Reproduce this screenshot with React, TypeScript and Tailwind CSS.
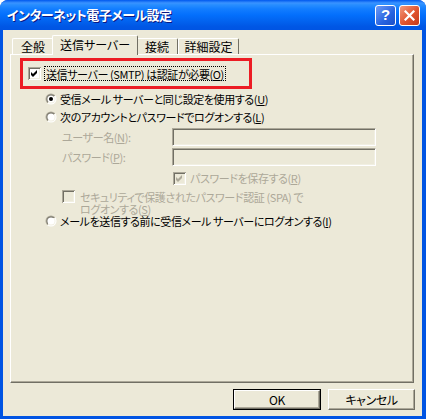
const face = "bg-[#ECE9D8]";

export default function App() {
  return (
    <div className="w-[426px] h-[419px] flex flex-col bg-[#0054E3] rounded-t-[8px] overflow-hidden font-['Noto_Sans_CJK_JP',sans-serif] text-[11px] leading-[14px] tracking-[-0.4px] text-black [font-feature-settings:'palt']">
      {/* Title bar */}
      <div className="h-[30px] shrink-0 flex items-center pl-[7px] pr-[6px] bg-[linear-gradient(to_bottom,#0058EE_0%,#3A93FF_10%,#288EFF_16%,#127DFF_30%,#036FFC_50%,#0262EE_72%,#0057E5_88%,#0054E3_100%)]">
        <span className="text-white font-bold text-[13px] [text-shadow:1px_1px_0_#0A1883] tracking-[-0.5px]">
          インターネット電子メール設定
        </span>
        <div className="ml-auto flex gap-[3px]">
          <div className="w-[21px] h-[21px] rounded-[3px] border border-white bg-[linear-gradient(135deg,#6F9BF6,#2663E0_60%,#1B50C8)] flex items-center justify-center text-white font-bold text-[15px] font-['Liberation_Sans',sans-serif]">
            ?
          </div>
          <div className="w-[21px] h-[21px] rounded-[3px] border border-white bg-[linear-gradient(135deg,#F29A7E,#E0532E_55%,#C43A1B)] flex items-center justify-center">
            <svg width="11" height="11" viewBox="0 0 11 11">
              <path d="M1.5 1.5 L9.5 9.5 M9.5 1.5 L1.5 9.5" stroke="white" strokeWidth="2.2" strokeLinecap="square" />
            </svg>
          </div>
        </div>
      </div>

      {/* Window body */}
      <div className={`flex-1 flex flex-col ${face} ml-[3px] mr-[4px] mb-[3px]`}>
        {/* Tabs */}
        <div className="h-[24px] shrink-0 flex items-end pl-[9px] text-[12px] tracking-normal">
          <Tab label="全般" className="w-[42px]" />
          <Tab label="送信サーバー" selected className="w-[86px]" />
          <Tab label="接続" className="w-[42px]" />
          <Tab label="詳細設定" className="w-[61px]" />
        </div>

        {/* Tab page */}
        <div className="h-[329px] shrink-0 ml-[7px] mr-[8px] border-t border-l border-white border-r border-b border-r-[#716F64] border-b-[#716F64] shadow-[inset_-1px_-1px_0_#ACA899] flex flex-col whitespace-nowrap">
          <div className="mt-[3px] ml-[9px] w-[232px] h-[31px] border-[3px] border-[#EC1C24] flex items-center pl-[5px]">
            <CheckBox checked />
            <span className="ml-[3px] px-[1px] h-[15px] flex items-center border border-dotted border-black">
              送信サーバー (SMTP) は認証が必要(<u>O</u>)
            </span>
          </div>

          <div className="mt-[1px] h-[18px] flex items-center ml-[34px]">
            <Radio checked />
            <span className="ml-[3px]">
              受信メール サーバーと同じ設定を使用する(<u>U</u>)
            </span>
          </div>
          <div className="h-[18px] flex items-center ml-[34px]">
            <Radio />
            <span className="ml-[3px]">
              次のアカウントとパスワードでログオンする(<u>L</u>)
            </span>
          </div>

          <div className="mt-[2px] h-[18px] flex items-center ml-[51px]">
            <span className="w-[110px] text-[#ACA899]">
              ユーザー名(<u>N</u>):
            </span>
            <Field />
          </div>
          <div className="mt-[2px] h-[18px] flex items-center ml-[51px]">
            <span className="w-[110px] text-[#ACA899]">
              パスワード(<u>P</u>):
            </span>
            <Field />
          </div>

          <div className="mt-[4px] h-[16px] flex items-center ml-[162px]">
            <CheckBox checked disabled />
            <span className="ml-[4px] text-[#ACA899]">
              パスワードを保存する(<u>R</u>)
            </span>
          </div>

          <div className="mt-[4px] flex items-start ml-[51px]">
            <CheckBox disabled />
            <span className="ml-[5px] mt-[1px] leading-[12px] text-[#ACA899]">
              セキュリティで保護されたパスワード認証 (SPA) で
              <br />
              ログオンする(<u>S</u>)
            </span>
          </div>

          <div className="h-[12px] flex items-center ml-[34px]">
            <Radio />
            <span className="ml-[3px]">
              メールを送信する前に受信メール サーバーにログオンする(<u>I</u>)
            </span>
          </div>
        </div>

        {/* Buttons */}
        <div className="mt-[6px] flex justify-end gap-[7px] pr-[7px] text-[12px]">
          <Button label="OK" isDefault />
          <Button label="キャンセル" />
        </div>
      </div>
    </div>
  );
}

function Tab({ label, selected, className }: { label: string; selected?: boolean; className?: string }) {
  return (
    <div
      className={
        selected
          ? `${className} relative z-10 -mx-[2px] -mb-[1px] h-[20px] ${face} border-t border-l border-white border-r border-r-[#716F64] rounded-t-[2px] flex items-center justify-center pb-[2px]`
          : `${className} h-[16px] ${face} border-t border-l border-white border-r border-r-[#716F64] rounded-t-[2px] flex items-center justify-center`
      }
    >
      {label}
    </div>
  );
}

function CheckBox({ checked, disabled }: { checked?: boolean; disabled?: boolean }) {
  return (
    <svg width="13" height="13" viewBox="0 0 13 13" className="shrink-0">
      <rect x="0" y="0" width="13" height="13" fill="#ACA899" />
      <rect x="1" y="1" width="12" height="12" fill="#FFFFFF" />
      <rect x="1" y="1" width="11" height="11" fill="#716F64" />
      <rect x="2" y="2" width="10" height="10" fill="#F1EFE2" />
      <rect x="2" y="2" width="9" height="9" fill={disabled ? "#ECE9D8" : "#FFFFFF"} />
      {checked && <polygon points="3,5 5,7 9,3 9,6 5,10 3,8" fill={disabled ? "#ACA899" : "#000000"} />}
    </svg>
  );
}

function Radio({ checked }: { checked?: boolean }) {
  return (
    <svg width="12" height="12" viewBox="0 0 12 12" className="shrink-0">
      <defs>
        <linearGradient id="rOuter" x1="0" y1="0" x2="1" y2="1">
          <stop offset="0.5" stopColor="#ACA899" />
          <stop offset="0.5" stopColor="#FFFFFF" />
        </linearGradient>
        <linearGradient id="rInner" x1="0" y1="0" x2="1" y2="1">
          <stop offset="0.5" stopColor="#716F64" />
          <stop offset="0.5" stopColor="#F1EFE2" />
        </linearGradient>
      </defs>
      <circle cx="6" cy="6" r="5.5" fill="url(#rOuter)" />
      <circle cx="6" cy="6" r="4.5" fill="url(#rInner)" />
      <circle cx="6" cy="6" r="3.6" fill="#FFFFFF" />
      {checked && <circle cx="6" cy="6" r="2" fill="#000000" />}
    </svg>
  );
}

function Field() {
  return (
    <div className="w-[204px] h-[18px] border-t border-l border-[#ACA899] border-r border-b border-r-white border-b-white shadow-[inset_1px_1px_0_#716F64,inset_-1px_-1px_0_#F1EFE2]" />
  );
}

function Button({ label, isDefault }: { label: string; isDefault?: boolean }) {
  return (
    <div className={isDefault ? "w-[88px] h-[21px] border border-black" : "w-[87px] h-[21px]"}>
      <div className="w-full h-full flex items-center justify-center border-t border-l border-white border-r border-b border-r-[#716F64] border-b-[#716F64] shadow-[inset_-1px_-1px_0_#ACA899]">
        {label}
      </div>
    </div>
  );
}
